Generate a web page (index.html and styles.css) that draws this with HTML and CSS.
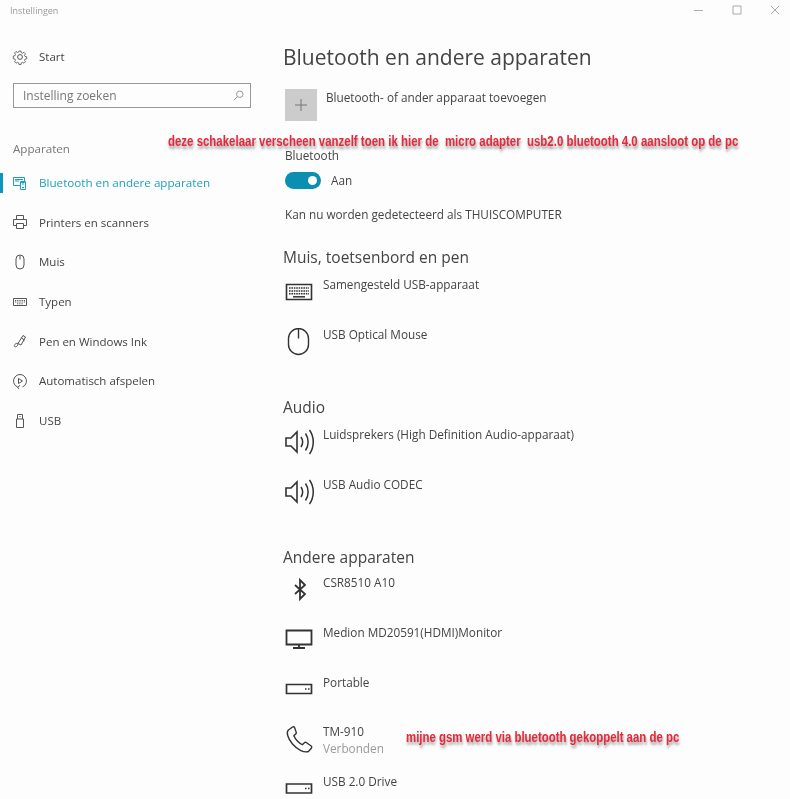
FILE: index.html
```html
<!DOCTYPE html>
<html lang="nl">

<head>
    <meta charset="UTF-8">
    <title>Instellingen</title>
    <link rel="stylesheet" href="styles.css">
</head>

<body>
    <div class="window">

        <header class="titlebar">
            <span class="app-name">Instellingen</span>
            <div class="window-buttons">
                <svg width="10" height="10" viewBox="0 0 10 10"><path d="M0 5.500h9" /></svg>
                <svg width="10" height="10" viewBox="0 0 10 10"><path d="M1 1h8v8H1z" /></svg>
                <svg width="10" height="10" viewBox="0 0 10 10"><path d="M1 1l8 8M9 1L1 9" /></svg>
            </div>
        </header>

        <div class="columns">

            <nav class="sidebar">
                <div class="nav-item start">
                    <svg class="nav-icon" width="16" height="16" viewBox="0 0 16 16">
                        <circle cx="8" cy="8" r="2.400" />
                        <path d="M6.800 1h2.400l.4 2 1.300.6 1.800-1.100 1.700 1.700-1.100 1.800.6 1.300 2 .4v2.400l-2 .4-.6 1.300 1.100 1.800-1.700 1.700-1.800-1.100-1.300.6-.4 2H6.800l-.4-2-1.300-.6-1.800 1.100-1.700-1.700 1.100-1.800-.6-1.300-2-.4V6.800l2-.4.6-1.300-1.100-1.800 1.700-1.700 1.800 1.100 1.300-.6z" transform="translate(1.200 1.200) scale(.85)" />
                    </svg>
                    <span>Start</span>
                </div>

                <div class="search">
                    <span>Instelling zoeken</span>
                    <svg width="11" height="11" viewBox="0 0 13 13">
                        <circle cx="8" cy="5" r="3.800" />
                        <path d="M5.200 7.800L1 12" />
                    </svg>
                </div>

                <div class="nav-group">Apparaten</div>

                <div class="nav-item active">
                    <svg class="nav-icon" width="16" height="16" viewBox="0 0 16 16">
                        <path d="M1.500 2.500h11v5h-4v3h-7z" />
                        <path d="M8.500 6.500h5v8h-5z" />
                        <path d="M3 4.500h8M3 6h4M10 9h2M10 12.500h2" />
                    </svg>
                    <span>Bluetooth en andere apparaten</span>
                </div>
                <div class="nav-item">
                    <svg class="nav-icon" width="16" height="16" viewBox="0 0 16 16">
                        <path d="M4.500 5V1.500h7V5M4 11.500H1.500V5.500h13v6H12" />
                        <path d="M4.500 9.500h7v5h-7z" />
                    </svg>
                    <span>Printers en scanners</span>
                </div>
                <div class="nav-item">
                    <svg class="nav-icon" width="16" height="16" viewBox="0 0 16 16">
                        <path d="M4 5a4 4 0 0 1 8 0v6a4 4 0 0 1-8 0z" />
                        <path d="M8 1.500v4" />
                    </svg>
                    <span>Muis</span>
                </div>
                <div class="nav-item">
                    <svg class="nav-icon" width="16" height="16" viewBox="0 0 16 16">
                        <path d="M1.500 4.500h13v7h-13z" />
                        <path d="M3 6.500h10M3 8h10M5 9.800h6" stroke-dasharray="1 .8" />
                    </svg>
                    <span>Typen</span>
                </div>
                <div class="nav-item">
                    <svg class="nav-icon" width="16" height="16" viewBox="0 0 16 16">
                        <path d="M6 10.500l5-8 2.500 1.500-4.500 8zM9.500 5l3 2-1.500 1" />
                        <path d="M6 10.500c-2-1-4.500 2-3.500 3s3.500-.5 3.500-2.500" />
                    </svg>
                    <span>Pen en Windows Ink</span>
                </div>
                <div class="nav-item">
                    <svg class="nav-icon" width="16" height="16" viewBox="0 0 16 16">
                        <path d="M10.500 14a6.500 6.500 0 1 0-5 0" />
                        <path d="M6.500 5.500l4 2.500-4 2.500z" />
                        <path d="M8 12.500l-2.500 1.500 1.500 2" />
                    </svg>
                    <span>Automatisch afspelen</span>
                </div>
                <div class="nav-item">
                    <svg class="nav-icon" width="16" height="16" viewBox="0 0 16 16">
                        <path d="M4.500 6h7v8.500h-7zM5.500 6V1.500h5V6" />
                        <path d="M7 3.500h.5M8.500 3.500H9" />
                    </svg>
                    <span>USB</span>
                </div>
            </nav>

            <main class="content">
                <h1>Bluetooth en andere apparaten</h1>

                <div class="add-device">
                    <div class="add-tile">
                        <svg width="14" height="14" viewBox="0 0 14 14"><path d="M7 1v12M1 7h12" /></svg>
                    </div>
                    <span>Bluetooth- of ander apparaat toevoegen</span>
                </div>

                <div class="bluetooth-label">Bluetooth</div>
                <div class="toggle-row">
                    <span class="toggle"><span class="knob"></span></span>
                    <span>Aan</span>
                </div>
                <p class="discover">Kan nu worden gedetecteerd als THUISCOMPUTER</p>

                <h2 class="first">Muis, toetsenbord en pen</h2>
                <div class="device">
                    <svg class="device-icon" width="28" height="28" viewBox="0 0 28 28">
                        <path d="M1.500 6.500h25v15h-25z" stroke-width="1.600" />
                        <path d="M4 10h20M4 13h20M4 15.800h20" stroke-width="1.600" stroke-dasharray="1.600 .8" />
                        <path d="M8 18.800h12" stroke-width="1.500" />
                    </svg>
                    <span>Samengesteld USB-apparaat</span>
                </div>
                <div class="device">
                    <svg class="device-icon" width="28" height="32" viewBox="0 0 28 32">
                        <path d="M3.500 10.500a10 10 0 0 1 20 0v6a10 10 0 0 1-20 0z" stroke-width="1.400" />
                        <path d="M13.500 .5v10" stroke-width="1.400" />
                    </svg>
                    <span>USB Optical Mouse</span>
                </div>

                <h2>Audio</h2>
                <div class="device">
                    <svg class="device-icon" width="30" height="28" viewBox="0 0 30 28">
                        <path d="M2 10h5l6-6v20l-6-6H2z" stroke-width="1.600" />
                        <path d="M17 9c2 3 2 7 0 10M21.500 5.500c3.500 5 3.500 12 0 17M25.500 2c5 7 5 17 0 24" stroke-width="1.500" />
                    </svg>
                    <span>Luidsprekers (High Definition Audio-apparaat)</span>
                </div>
                <div class="device">
                    <svg class="device-icon" width="30" height="28" viewBox="0 0 30 28">
                        <path d="M2 10h5l6-6v20l-6-6H2z" stroke-width="1.600" />
                        <path d="M17 9c2 3 2 7 0 10M21.500 5.500c3.500 5 3.500 12 0 17M25.500 2c5 7 5 17 0 24" stroke-width="1.500" />
                    </svg>
                    <span>USB Audio CODEC</span>
                </div>

                <h2 class="others">Andere apparaten</h2>
                <div class="device">
                    <svg class="device-icon" width="28" height="26" viewBox="0 0 28 26">
                        <path d="M10 9l10 9-5 5V4l5 5-10 9" stroke-width="1.800" />
                    </svg>
                    <span>CSR8510 A10</span>
                </div>
                <div class="device">
                    <svg class="device-icon" width="28" height="28" viewBox="0 0 28 28">
                        <path d="M1.500 4.500h25v14h-25z" stroke-width="1.800" />
                        <path d="M14 18.500v3.500M8 22h12" stroke-width="1.800" />
                    </svg>
                    <span>Medion MD20591(HDMI)Monitor</span>
                </div>
                <div class="device">
                    <svg class="device-icon" width="28" height="28" viewBox="0 0 28 28">
                        <path d="M1.500 8.500h25v9h-25z" stroke-width="1.700" />
                        <path d="M20 13h1.500M23 13h1.500" stroke-width="1.700" />
                    </svg>
                    <span>Portable</span>
                </div>
                <div class="device">
                    <svg class="device-icon" width="28" height="30" viewBox="0 0 28 30">
                        <path d="M7.500 2l-4 3c-2.500 2-1 8 4 14s12 9 16 7.500l3-3.500c.5-.8.3-1.500-.3-2l-5-3.500c-.7-.4-1.300-.3-1.800.2l-2 2c-3-1-7-5-8.500-9l2-2c.5-.5.6-1.200.2-1.800L9.500 2.300c-.5-.6-1.300-.7-2-.3z" stroke-width="1.400" />
                    </svg>
                    <div>
                        <div>TM-910</div>
                        <div class="status">Verbonden</div>
                    </div>
                </div>
                <div class="device">
                    <svg class="device-icon" width="28" height="28" viewBox="0 0 28 28">
                        <path d="M1.500 9h25v9h-25z" stroke-width="1.700" />
                        <path d="M20 13.500h1.500M23 13.500h1.500" stroke-width="1.700" />
                    </svg>
                    <span>USB 2.0 Drive</span>
                </div>
            </main>
        </div>

        <div class="note note-switch">deze schakelaar verscheen vanzelf toen ik hier de&nbsp; micro adapter&nbsp; usb2.0 bluetooth 4.0 aansloot op de pc</div>
        <div class="note note-phone">mijne gsm werd via bluetooth gekoppelt aan de pc</div>
    </div>
</body>

</html>
```

FILE: styles.css
```css
html,
body {
    margin: 0;
    padding: 0;
    height: 100%;
    overflow: hidden;
}

body {
    background-color: #fdfdfd;
    color: #444;
    font-family: "Open Sans", "Noto Sans", sans-serif;
    font-size: 11.75px;
}

svg {
    fill: none;
    stroke: currentColor;
    flex-shrink: 0;
}

.window {
    position: relative;
    height: 799px;
    overflow: hidden;
}

/* titelbalk */
.titlebar {
    display: flex;
    justify-content: space-between;
    align-items: center;
    height: 20px;
    padding-left: 10px;
    color: #999;
    filter: blur(0.4px);
}

.app-name {
    font-size: 9px;
}

.window-buttons {
    display: flex;
    gap: 28px;
    padding-right: 10px;
    color: #aaa;
}

.columns {
    display: flex;
}

/* zijbalk */
.sidebar {
    width: 283px;
    flex-shrink: 0;
    filter: blur(0.4px);
}

.nav-item {
    position: relative;
    display: flex;
    align-items: center;
    gap: 11px;
    height: 39.7px;
    padding-left: 12px;
    box-sizing: border-box;
    font-size: 11.5px;
    color: #444;
}

.nav-item.start {
    margin-top: 17px;
}

.nav-item.active {
    color: #1c9fc0;
    font-size: 11.65px;
}

.nav-item.active::before {
    content: "";
    position: absolute;
    left: 0;
    top: 10px;
    width: 3px;
    height: 20px;
    background-color: #0a96bd;
}

.nav-icon {
    color: #555;
}

.nav-item.active .nav-icon {
    color: #1c9fc0;
}

.search {
    display: flex;
    justify-content: space-between;
    align-items: center;
    width: 238px;
    height: 25px;
    margin: 6px 0 0 13px;
    padding: 1px 6px 0 9px;
    box-sizing: border-box;
    border: 1px solid #999;
    font-size: 12px;
    color: #777;
}

.search svg {
    color: #888;
}

.nav-group {
    margin: 31px 0 4px 13px;
    height: 20px;
    line-height: 20px;
    font-size: 11.6px;
    color: #777;
}

/* inhoud */
.content {
    flex-grow: 1;
    filter: blur(0.4px);
}

h1 {
    margin: 21px 0 0;
    height: 32px;
    line-height: 32px;
    font-size: 21px;
    font-weight: 400;
    color: #444;
}

.add-device {
    display: flex;
    gap: 9px;
    margin: 16px 0 0 2px;
    height: 33px;
}

.add-tile {
    display: flex;
    justify-content: center;
    align-items: center;
    width: 32px;
    height: 32px;
    background-color: #ccc;
    color: #777;
}

.bluetooth-label {
    margin: 26px 0 0 2px;
    line-height: 14px;
}

.toggle-row {
    display: flex;
    align-items: center;
    gap: 10px;
    margin: 9px 0 0 2px;
    height: 18px;
}

.toggle {
    display: flex;
    justify-content: flex-end;
    align-items: center;
    width: 36px;
    height: 17px;
    padding-right: 4px;
    box-sizing: border-box;
    border-radius: 9px;
    background-color: #0a8fb3;
}

.knob {
    width: 9px;
    height: 9px;
    border-radius: 50%;
    background-color: #fff;
}

.discover {
    margin: 15px 0 0 2px;
    line-height: 20px;
}

h2 {
    margin: 21.5px 0 5px;
    height: 24px;
    line-height: 24px;
    font-size: 15.5px;
    font-weight: 400;
    color: #444;
}

h2.first {
    margin: 21px 0 5px;
}

h2.others {
    margin: 22px 0 3px;
}

.device {
    display: flex;
    gap: 9px;
    height: 49.7px;
    line-height: 20px;
    color: #444;
}

.device-icon {
    width: 30px;
    margin: 4px 0 0 1px;
    color: #333;
}

.status {
    color: #999;
    line-height: 14px;
}

/* rode aantekeningen over de schermafbeelding */
.note {
    position: absolute;
    font-family: "Liberation Sans", sans-serif;
    font-weight: 700;
    font-size: 14px;
    line-height: 14px;
    white-space: nowrap;
    color: #e8283a;
    text-shadow: 1px 3px 3px rgba(0, 0, 0, 0.4);
    transform: scaleX(0.815);
    transform-origin: left center;
    filter: blur(0.3px);
}

.note-switch {
    left: 168px;
    top: 134px;
    letter-spacing: 0.025px;
}

.note-phone {
    left: 406px;
    top: 730px;
}
```
